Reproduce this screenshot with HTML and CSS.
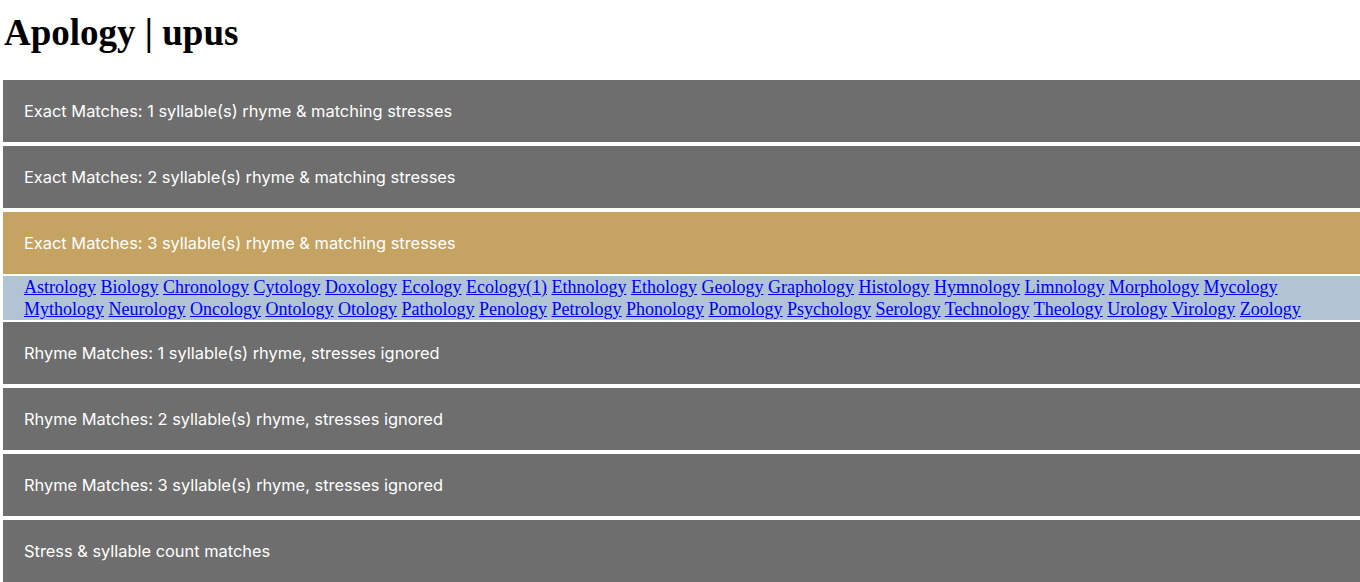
FILE: index.html
```html
<!DOCTYPE html>
<html>
<head>
<meta charset="utf-8">
<title>Apology | upus</title>
<link rel="stylesheet" href="styles.css">
</head>
<body>
<h1 class="title">Apology | upus</h1>
<div class="groups">
  <div class="bar">Exact Matches: 1 syllable(s) rhyme &amp; matching stresses</div>
  <div class="bar">Exact Matches: 2 syllable(s) rhyme &amp; matching stresses</div>
  <div class="bar bar-active">Exact Matches: 3 syllable(s) rhyme &amp; matching stresses</div>
  <div class="words">
    <a href="#">Astrology</a> <a href="#">Biology</a> <a href="#">Chronology</a> <a href="#">Cytology</a> <a href="#">Doxology</a> <a href="#">Ecology</a> <a href="#">Ecology(1)</a> <a href="#">Ethnology</a> <a href="#">Ethology</a> <a href="#">Geology</a> <a href="#">Graphology</a> <a href="#">Histology</a> <a href="#">Hymnology</a> <a href="#">Limnology</a> <a href="#">Morphology</a> <a href="#">Mycology</a> <a href="#">Mythology</a> <a href="#">Neurology</a> <a href="#">Oncology</a> <a href="#">Ontology</a> <a href="#">Otology</a> <a href="#">Pathology</a> <a href="#">Penology</a> <a href="#">Petrology</a> <a href="#">Phonology</a> <a href="#">Pomology</a> <a href="#">Psychology</a> <a href="#">Serology</a> <a href="#">Technology</a> <a href="#">Theology</a> <a href="#">Urology</a> <a href="#">Virology</a> <a href="#">Zoology</a>
  </div>
  <div class="bar">Rhyme Matches: 1 syllable(s) rhyme, stresses ignored</div>
  <div class="bar">Rhyme Matches: 2 syllable(s) rhyme, stresses ignored</div>
  <div class="bar">Rhyme Matches: 3 syllable(s) rhyme, stresses ignored</div>
  <div class="bar">Stress &amp; syllable count matches</div>
</div>
</body>
</html>
```
FILE: styles.css
```css
html, body {
  margin: 0;
  padding: 0;
  background: #ffffff;
}
body {
  padding-left: 3px;
  font-family: "Liberation Serif", "Times New Roman", serif;
}
.title {
  font-family: "Liberation Serif", "Times New Roman", serif;
  font-weight: bold;
  font-size: 37px;
  line-height: 41px;
  margin: 12px 0 27px 1px;
  color: #000;
}
.groups {
  display: flex;
  flex-direction: column;
}
.bar {
  height: 62px;
  display: flex;
  align-items: center;
  padding: 0 21px;
  background: #6e6e6e;
  color: #ffffff;
  font-family: Inter, "Liberation Sans", Arial, sans-serif;
  font-size: 16.4px;
  margin-bottom: 4px;
}
.bar-active {
  background: #c5a363;
  margin-bottom: 2px;
}
.words {
  background: #b0c4d4;
  padding: 0 21px;
  font-family: "Liberation Serif", "Times New Roman", serif;
  font-size: 18px;
  line-height: 22px;
  height: 44px;
  margin-bottom: 2px;
}
.words a {
  color: #0000ee;
  text-decoration: underline;
}
```
